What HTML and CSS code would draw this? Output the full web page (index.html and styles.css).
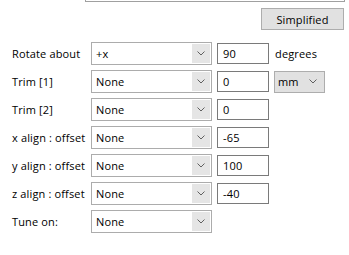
FILE: index.html
```html
<!DOCTYPE html>
<html lang="en">
<head>
  <meta charset="UTF-8">
  <title>Rotate options</title>
  <link rel="stylesheet" href="styles.css">
</head>
<body>

  <div class="panel">
    <div class="top-box"></div>

    <div class="toolbar">
      <div class="button">Simplified</div>
    </div>

    <div class="rows">
      <div class="row">
        <span class="label">Rotate about</span>
        <div class="combo"><span class="combo-text">+x</span><span class="combo-btn"><svg width="8" height="5" viewBox="0 0 8 5"><polyline points="0.5,0.5 4,4 7.5,0.5" /></svg></span></div>
        <div class="field">90</div>
        <span class="unit-text">degrees</span>
      </div>

      <div class="row">
        <span class="label">Trim [1]</span>
        <div class="combo"><span class="combo-text">None</span><span class="combo-btn"><svg width="8" height="5" viewBox="0 0 8 5"><polyline points="0.5,0.5 4,4 7.5,0.5" /></svg></span></div>
        <div class="field">0</div>
        <div class="unit-combo"><span>mm</span><svg width="8" height="5" viewBox="0 0 8 5"><polyline points="0.5,0.5 4,4 7.5,0.5" /></svg></div>
      </div>

      <div class="row">
        <span class="label">Trim [2]</span>
        <div class="combo"><span class="combo-text">None</span><span class="combo-btn"><svg width="8" height="5" viewBox="0 0 8 5"><polyline points="0.5,0.5 4,4 7.5,0.5" /></svg></span></div>
        <div class="field">0</div>
      </div>

      <div class="row">
        <span class="label">x align : offset</span>
        <div class="combo"><span class="combo-text">None</span><span class="combo-btn"><svg width="8" height="5" viewBox="0 0 8 5"><polyline points="0.5,0.5 4,4 7.5,0.5" /></svg></span></div>
        <div class="field">-65</div>
      </div>

      <div class="row">
        <span class="label">y align : offset</span>
        <div class="combo"><span class="combo-text">None</span><span class="combo-btn"><svg width="8" height="5" viewBox="0 0 8 5"><polyline points="0.5,0.5 4,4 7.5,0.5" /></svg></span></div>
        <div class="field">100</div>
      </div>

      <div class="row">
        <span class="label">z align : offset</span>
        <div class="combo"><span class="combo-text">None</span><span class="combo-btn"><svg width="8" height="5" viewBox="0 0 8 5"><polyline points="0.5,0.5 4,4 7.5,0.5" /></svg></span></div>
        <div class="field">-40</div>
      </div>

      <div class="row">
        <span class="label">Tune on:</span>
        <div class="combo"><span class="combo-text">None</span><span class="combo-btn"><svg width="8" height="5" viewBox="0 0 8 5"><polyline points="0.5,0.5 4,4 7.5,0.5" /></svg></span></div>
      </div>
    </div>
  </div>

</body>
</html>
```

FILE: styles.css
```css
* { margin: 0; padding: 0; box-sizing: border-box; }
body {
  background: #fff;
  color: #000;
  font-family: "Open Sans", "Noto Sans", sans-serif;
  font-size: 11px;
  letter-spacing: 0.15px;
}
.panel { width: 349px; height: 255px; overflow: hidden; }

.top-box {
  margin-left: 85px;
  width: 260px;
  height: 2px;
  border: 1px solid #a0a0a0;
  border-top: none;
}

.toolbar {
  display: flex;
  justify-content: flex-end;
  padding: 6px 5px 0 0;
}
.button {
  width: 83px;
  height: 22px;
  background: #e1e1e1;
  border: 1px solid #adadad;
  display: flex;
  align-items: center;
  justify-content: center;
}

.rows {
  margin-top: 12px;
  display: flex;
  flex-direction: column;
  gap: 5px;
}
.row {
  display: flex;
  align-items: center;
  height: 23px;
  padding-left: 12px;
}
.label { width: 79px; white-space: nowrap; }

.combo {
  width: 121px;
  height: 23px;
  border: 1px solid #acacac;
  background: #fff;
  display: flex;
  padding: 1px;
}
.combo-text { flex: 1; padding-left: 3px; line-height: 19px; }
.combo-btn {
  width: 18px;
  background: #e5e5e5;
  display: flex;
  align-items: center;
  justify-content: center;
}
svg polyline { fill: none; stroke: #606060; stroke-width: 1; }

.field {
  width: 52px;
  height: 21px;
  margin-left: 5px;
  border: 1px solid #7a7a7a;
  background: #fff;
  padding-left: 5px;
  line-height: 19px;
}
.unit-text { margin-left: 6px; }
.unit-combo {
  width: 51px;
  height: 22px;
  margin-left: 5px;
  background: #e1e1e1;
  border: 1px solid #adadad;
  display: flex;
  align-items: center;
  justify-content: space-between;
  padding: 0 7px 0 3px;
}
```
